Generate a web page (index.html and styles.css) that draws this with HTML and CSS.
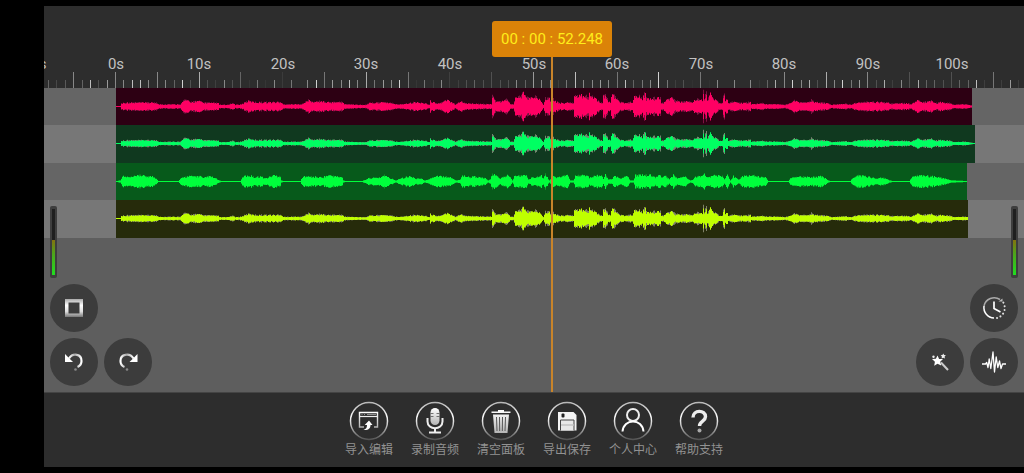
FILE: index.html
```html
<!DOCTYPE html>
<html lang="zh-CN">
<head>
<meta charset="utf-8">
<meta name="viewport" content="width=device-width, initial-scale=1">
<title>音频编辑</title>
<link rel="stylesheet" href="styles.css">
</head>
<body>
<svg class="defs" aria-hidden="true">
  <defs>
    <linearGradient id="ring" x1="0" y1="0" x2="0" y2="1"><stop offset="0" stop-color="#b8b8b8"/><stop offset=".4" stop-color="#fff"/><stop offset="1" stop-color="#555"/></linearGradient>
    <linearGradient id="metal" x1="0" y1="0" x2="0" y2="1"><stop offset="0" stop-color="#fff"/><stop offset="1" stop-color="#b4b4b4"/></linearGradient>
    <linearGradient id="frame" x1="0" y1="0" x2="0" y2="1"><stop offset="0" stop-color="#aaa"/><stop offset=".35" stop-color="#fff"/><stop offset=".7" stop-color="#ddd"/><stop offset="1" stop-color="#777"/></linearGradient>
    <linearGradient id="undo" x1="0" y1="0" x2="1" y2="0"><stop offset="0" stop-color="#fff"/><stop offset=".45" stop-color="#aaa"/><stop offset="1" stop-color="#fff"/></linearGradient>
  </defs>
</svg>
<main class="app">
  <header class="ruler"><svg class="ruler-scale" id="ruler" role="img" aria-label="时间标尺"></svg></header>
  <section class="stage">
    <div class="tracks" id="tracks"></div>
    <div class="panel panel-left">
      <div class="meter"><div class="meter-level"></div></div>
      <button class="round" type="button" aria-label="停止"><svg viewBox="0 0 48 48"><path d="M15 15h18v18H15zM18.500 18.500v11h11v-11z" fill="url(#frame)" fill-rule="evenodd"/></svg></button>
      <div class="pair">
        <button class="round" type="button" aria-label="撤销"><svg viewBox="0 0 48 48"><path d="M19 20.500C23 14.500 31.500 16 31.500 23c0 3-1.800 5-4 6" fill="none" stroke="url(#undo)" stroke-width="2.200"/><path d="M15 16v8h8l-2.800-2.800-2-2z" fill="#fff"/><circle cx="25.500" cy="31.500" r="1.300" fill="#888"/></svg></button>
        <button class="round" type="button" aria-label="重做"><svg viewBox="0 0 48 48"><path d="M29.500 20.500C25.500 14.500 16.500 16 16.500 23c0 3 1.600 5 4 6" fill="none" stroke="url(#undo)" stroke-width="2.200"/><path d="M33.500 16v8h-8l2.800-2.800 2-2z" fill="#fff"/><circle cx="23" cy="31.500" r="1.300" fill="#888"/></svg></button>
      </div>
    </div>
    <div class="panel panel-right">
      <div class="meter"><div class="meter-level"></div></div>
      <button class="round" type="button" aria-label="定时"><svg viewBox="0 0 48 48" fill="none"><path d="M30 15.500A10.500 10.500 0 0 0 14 22" stroke="#aaa" stroke-width="1.500"/><path d="M14 22A10.500 10.500 0 0 0 24 34" stroke="#fff" stroke-width="1.500"/><path d="M27 34A10.500 10.500 0 0 0 33 18" stroke="#ddd" stroke-width="2" stroke-linecap="round" stroke-dasharray=".1 3.700"/><path d="M24 17.500v7l6.500 3.500" stroke="#fff" stroke-width="1.700"/><path d="M28.500 17.500h4v-3z" fill="#bbb"/></svg></button>
      <div class="pair">
        <button class="round" type="button" aria-label="特效"><svg viewBox="0 0 48 48" fill="#eee"><path d="M21.500 17.500l1.600 3.400 3.900.2-2.800 2.700 1 3.800-3.700-1.900-3.300 2 .7-3.900-2.900-2.700 3.900-.4z" fill="#fff"/><path d="M25 24.500l7 7.500" stroke="#ccc" stroke-width="2"/><path d="M27.300 15.500l.8 1.500 1.800.3-1.300 1.300.3 1.900-1.600-.8-1.700.8.300-1.900-1.300-1.300 1.800-.3z"/><circle cx="17.500" cy="18.700" r="1.200"/></svg></button>
        <button class="round" type="button" aria-label="波形"><svg viewBox="0 0 48 48"><path d="M12 26h3.500l1.200-1.500 1.300 5 1.200-8.500 1.600 9.500L23 14l1.500 20L26.200 19l1.600 10.500L29.500 23l1.500 7.500 1.500-4.500H36" fill="none" stroke="#fff" stroke-width="1.300" stroke-linejoin="round"/></svg></button>
      </div>
    </div>
    <div class="playhead"><output class="timecode">00 : 00 : 52.248</output></div>
  </section>
  <nav class="toolbar">
    <button class="tool" type="button"><svg viewBox="0 0 40 40"><circle class="tool-ring" cx="20" cy="20" r="18.500"/><path d="M15 26h-4.500V11.500h18V26H25" fill="none" stroke="url(#metal)" stroke-width="1.400"/><path d="M10.500 15.500h18" stroke="#eee" stroke-width="1.200"/><path d="M12.500 13.500h1M15 13.500h1M18 13.500h9" stroke="#aaa" stroke-width=".8"/><path d="M14.500 29c3-1 3.500-3 3.500-5h-2.300l4.300-4.500 3.500 4.500h-2c0 4-3 5.500-7 5z" fill="#fff"/></svg>导入编辑</button>
    <button class="tool" type="button"><svg viewBox="0 0 40 40"><circle class="tool-ring" cx="20" cy="20" r="18.500"/><rect x="15.500" y="7" width="9" height="17" rx="4.500" fill="url(#metal)"/><path d="M15.500 12.500h3M15.500 15.500h3M21.500 12.500h3M21.500 15.500h3" stroke="#555" stroke-width=".8"/><path d="M12.500 17v3.500c0 9 15 9 15 0V17" fill="none" stroke="#eee" stroke-width="2"/><path d="M20 27v4M14 31.500h12" stroke="#eee" stroke-width="2"/></svg>录制音频</button>
    <button class="tool" type="button"><svg viewBox="0 0 40 40"><circle class="tool-ring" cx="20" cy="20" r="18.500"/><path d="M10.500 10.500h6.500V9h6v1.500h6.500V12h-19zM12 13.500h16L26.500 32h-13z" fill="url(#metal)"/><path d="M15.500 16l.5 14M18.500 16l.2 14M21.500 16l-.2 14M24.500 16l-.5 14" stroke="#555" stroke-width="1"/></svg>清空面板</button>
    <button class="tool" type="button"><svg viewBox="0 0 40 40"><circle class="tool-ring" cx="20" cy="20" r="18.500"/><path d="M11 11h15.500l3 3v15.500H11z" fill="#f4f4f4"/><rect x="14.500" y="12.500" width="3" height="4" rx="1" fill="#222"/><path d="M13.500 29.500V19h13.500v10.500" fill="#e8e8e8" stroke="#444" stroke-width="1"/><path d="M14 24h12.500" stroke="#ccc" stroke-width="2"/></svg>导出保存</button>
    <button class="tool" type="button"><svg viewBox="0 0 40 40"><circle class="tool-ring" cx="20" cy="20" r="18.500"/><circle cx="20" cy="14" r="6" fill="none" stroke="#eee" stroke-width="2"/><path d="M9.500 30.500c1-13.500 20-13.500 21 0" fill="none" stroke="#fff" stroke-width="2"/></svg>个人中心</button>
    <button class="tool" type="button"><svg viewBox="0 0 40 40"><circle class="tool-ring" cx="20" cy="20" r="18.500"/><path d="M14 16.500c0-8 12.500-8 12.500-.7 0 4.400-6 4.200-6 9.200" fill="none" stroke="#eee" stroke-width="3.400"/><circle cx="20.500" cy="29.500" r="2" fill="#aaa"/></svg>帮助支持</button>
  </nav>
</main>
<script src="app.js"></script>
</body>
</html>
```

FILE: styles.css
```css
* { box-sizing: border-box; }
body {
  margin: 0;
  min-height: 100vh;
  display: flex;
  padding: 6px 0 6px 44px;
  background: #000;
  font-family: Roboto, "Noto Sans CJK SC", sans-serif;
}
button { border: 0; padding: 0; font: inherit; cursor: pointer; }
svg { display: block; }
.defs { position: absolute; width: 0; height: 0; }
.app {
  flex: 1;
  min-width: 0;
  display: flex;
  flex-direction: column;
  background: #2d2d2d;
}
.ruler { height: 82px; }
.ruler-scale { width: 100%; height: 100%; overflow: hidden; }
.ruler-label { fill: #c2c2c2; font-size: 15px; text-anchor: middle; }

.stage { flex: 1; min-height: 304px; position: relative; background: #5e5e5e; }
.tracks { display: grid; grid-template-rows: repeat(2, 37px 38px); overflow: hidden; }
.track { background: #656565; padding-left: 72px; }
.track:nth-child(even) { background: #777; }
.clip { height: 100%; }
.clip svg { width: 100%; height: 100%; }
.clip-rose { background: #2d0013; color: #ff0063; }
.clip-mint { background: #10391f; color: #00ff62; }
.clip-green { background: #075a1b; color: #00ff3c; }
.clip-lime { background: #262b0b; color: #bfff00; }
.wave { fill: currentColor; }
.wave-peak { fill: #b9b9a5; opacity: .6; }
.clip-rose .wave-peak { fill: #b02060; }
.clip-green .wave-peak { fill: #10c030; }

.panel {
  position: absolute;
  bottom: 6px;
  display: flex;
  flex-direction: column;
  gap: 6px;
}
.panel-left { left: 6px; align-items: flex-start; }
.panel-right { right: 6px; align-items: flex-end; }
.pair { display: flex; gap: 6px; }
.round { width: 48px; height: 48px; border-radius: 50%; background: #3c3c3c; }
.meter {
  width: 7px;
  height: 72px;
  padding: 3px 2px;
  border-radius: 2px;
  background: linear-gradient(#1f1f1f, #1f1f1f) content-box, #3e3e3e;
  display: flex;
  align-items: flex-end;
}
.meter-level { width: 100%; height: 53%; background: linear-gradient(#84720f, #4da51b 40%, #20de20); }

.playhead {
  position: absolute;
  top: -67px;
  bottom: 0;
  left: 508px;
  width: 2px;
  margin-left: -1px;
  display: flex;
  justify-content: center;
  align-items: flex-start;
  background: #c8842a;
}
.timecode {
  flex: none;
  padding: 0 9px;
  line-height: 36px;
  border-radius: 3px;
  background: #db8308;
  color: #ffed1a;
  font-size: 15px;
  white-space: nowrap;
}

.toolbar {
  height: 75px;
  display: flex;
  justify-content: center;
  padding-top: 8px;
  border-top: 1px solid #444;
}
.tool {
  width: 66px;
  display: flex;
  flex-direction: column;
  align-items: center;
  background: none;
  color: #929292;
  font-size: 12px;
  line-height: 18px;
}
.tool svg { width: 40px; height: 40px; }
.tool-ring { fill: none; stroke: url(#ring); stroke-width: 1.5; }
```

FILE: app.js
```js
const PX_PER_SECOND = 8.36;
const ORIGIN = 72;
const NS = "http://www.w3.org/2000/svg";

function node(name, attrs, parent) {
  const el = document.createElementNS(NS, name);
  for (const key in attrs) el.setAttribute(key, attrs[key]);
  parent.appendChild(el);
  return el;
}

/* Tick brightness in percent, one per second, starting at -8s */
const ticks = [30,15,25,50,30,80,20,60,50,50,80,80,50,50,50,30,90,20,70,20,10,50,20,30,5,40,5,50,8,40,0,50,90,40,60,50,80,50,70,40,60,50,90,40,5,40,10,50,10,10,20,30,20,20,20,20,50,30,60,50,50,10,40,80,50,50,60,50,40,80,30,40,50,90,40,10,20,3,40,3,50,0,50,0,50,5,30,70,50,90,50,70,20,70,50,90,40,60,50,20,70,10,50,20,70,30,30,20,20,30,30,80,10,40,10,60,10];
const ruler = document.getElementById("ruler");
ticks.forEach((level, i) => {
  const s = i - 8;
  const h = s % 5 === 0 ? 16 : 8;
  node("rect", { x: Math.round(ORIGIN - 1 + s * PX_PER_SECOND), y: 82 - h, width: 1, height: h, fill: "#fff", opacity: level / 115 }, ruler);
});
for (let s = -10; s <= 100; s += 10) {
  node("text", { x: Math.round(ORIGIN - .4 + s * PX_PER_SECOND), y: 63, class: "ruler-label" }, ruler).textContent = s + "s";
}

/* Loudness envelopes: position and half height pairs */
const song = [44,0,116,.5,120,.6,121,3,125,3.5,156,3.5,158,2,180,2,183,5,186,6,190,4,200,5,203,3.5,218,3,219,1.5,228,1.5,232,3,235,1.5,241,2,245,4,248,5,255,4,280,4,283,2,300,2,304,3,308,6,312,4,322,5,324,4,342,4,344,2,366,1.5,368,3,385,4,392,3,395,2,400,2,407,3,415,4,425,3,429,1.5,430,5,436,3,440,3,447,6,452,4,455,2,461,5,465,3,476,2.5,491,2,492,9,496,4,503,5,507,7,510,2,513,2,515,8,520,9,523,13,526,8,533,8,536,9,541,5,543,2,545,8,549,8,551,4,552,7,557,4,563,3,568,4,571,3,573,3,574,9,578,9,580,11,585,10,588,8,589,14,590,9,594,9,597,6,600,4,602,3,603,11,606,9,608,4,610,4,612,12,615,9,619,4,625,3,630,4,632,3,634,9,640,9,642,7,645,13,646,7,650,7,660,8,661,3,663,3,665,5,671,9,675,5,682,4,685,5,690,4,693,4,694,6,700,7,702,5,703,14,704,8,706,12,707,5,710,12,712,8,716,6,719,3,722,3,723,9,724,11,725,6,727,6,728,3,733,4,740,3,750,4,751,2,763,3,765,2,780,2,785,1.5,790,3,795,6,798,4,808,4,811,6,814,4,827,3,831,1.5,845,2.5,850,1.5,855,3,862,4,875,4,888,4,890,2.5,905,3,911,2,915,4,918,6,922,4,932,5,935,3,940,4,950,3,953,1.5,965,2,970,1,975,.5];
const voice = [44,0,116,.5,120,1,122,5,130,4,140,6,145,5,152,5,156,3,158,.5,178,.5,182,4,190,5,200,5,203,3,208,5,213,4,219,1,221,.5,240,.5,243,5,249,6,255,4,260,5,265,3,268,4,273,6,280,5,281,1,283,.5,300,.5,303,5,322,4,328,6,342,4,343,1,345,.5,362,.5,368,3,380,4,384,6,390,3,396,1,399,3,410,5,415,3,420,3,425,1,430,3,437,5,445,5,450,4,456,1,460,2,462,6,470,4,473,5,485,3,488,1,490,2,492,7,497,5,500,3,507,6,510,4,512,1,514,5,526,6,528,2,532,4,541,6,543,3,545,7,549,1,552,5,557,4,567,6,570,1,573,1,575,6,586,6,589,4,596,6,602,5,603,2,605,7,608,2,611,2,614,5,620,3,627,5,630,1,633,1,635,6,650,6,655,4,660,6,662,4,665,6,669,2,673,6,678,3,684,5,690,1,693,2,695,5,702,5,704,7,707,4,714,6,722,5,724,2,727,6,730,1,733,5,738,2,742,5,753,6,760,4,765,4,768,.5,788,.5,791,4,800,5,810,4,822,5,828,1,830,.5,850,.5,852,3,857,6,865,5,875,3,880,4,885,3,889,1,893,.5,909,.5,912,5,918,6,930,5,940,4,951,1,967,.5];

function amplitude(env, x) {
  for (let i = 2; i < env.length; i += 2) {
    if (x <= env[i]) {
      const t = (x - env[i - 2]) / (env[i] - env[i - 2]);
      return env[i - 1] + t * (env[i + 1] - env[i - 1]);
    }
  }
  return .5;
}

/* One bar per pixel column, so the outline stays jagged */
function wavePath(env, width, scale, seed) {
  let up = "", down = "";
  for (let x = 0; x < width; x += 1) {
    const a = amplitude(env, x + 116);
    const noise = Math.abs(Math.sin((x + seed) * 12.9898) * 43758.5453) % 1;
    const h = a <= 1 ? Math.max(.5, a * scale) : Math.max(1, a * scale * (.75 + noise * .45));
    up += `V${(18.5 - h).toFixed(1)}h1`;
    down = `V${(18.5 + h).toFixed(1)}h-1` + down;
  }
  return "M0 18.5" + up + down + "Z";
}

const clips = [
  { tone: "rose", width: 856, env: song, body: 1, peak: 1.1, seed: 1 },
  { tone: "mint", width: 859, env: song, body: .8, peak: .9, seed: 1 },
  { tone: "green", width: 851, env: voice, body: 1, peak: 1, seed: 9 },
  { tone: "lime", width: 852, env: song, body: .8, peak: .9, seed: 1 }
];
clips.forEach(c => {
  const row = document.createElement("div");
  row.className = "track";
  const clip = document.createElement("div");
  clip.className = "clip clip-" + c.tone;
  clip.style.width = c.width + "px";
  const svg = node("svg", { "aria-hidden": "true" }, clip);
  node("path", { d: wavePath(c.env, c.width, c.peak, c.seed + 4), class: "wave-peak" }, svg);
  node("path", { d: wavePath(c.env, c.width, c.body, c.seed), class: "wave" }, svg);
  row.appendChild(clip);
  document.getElementById("tracks").appendChild(row);
});
```
